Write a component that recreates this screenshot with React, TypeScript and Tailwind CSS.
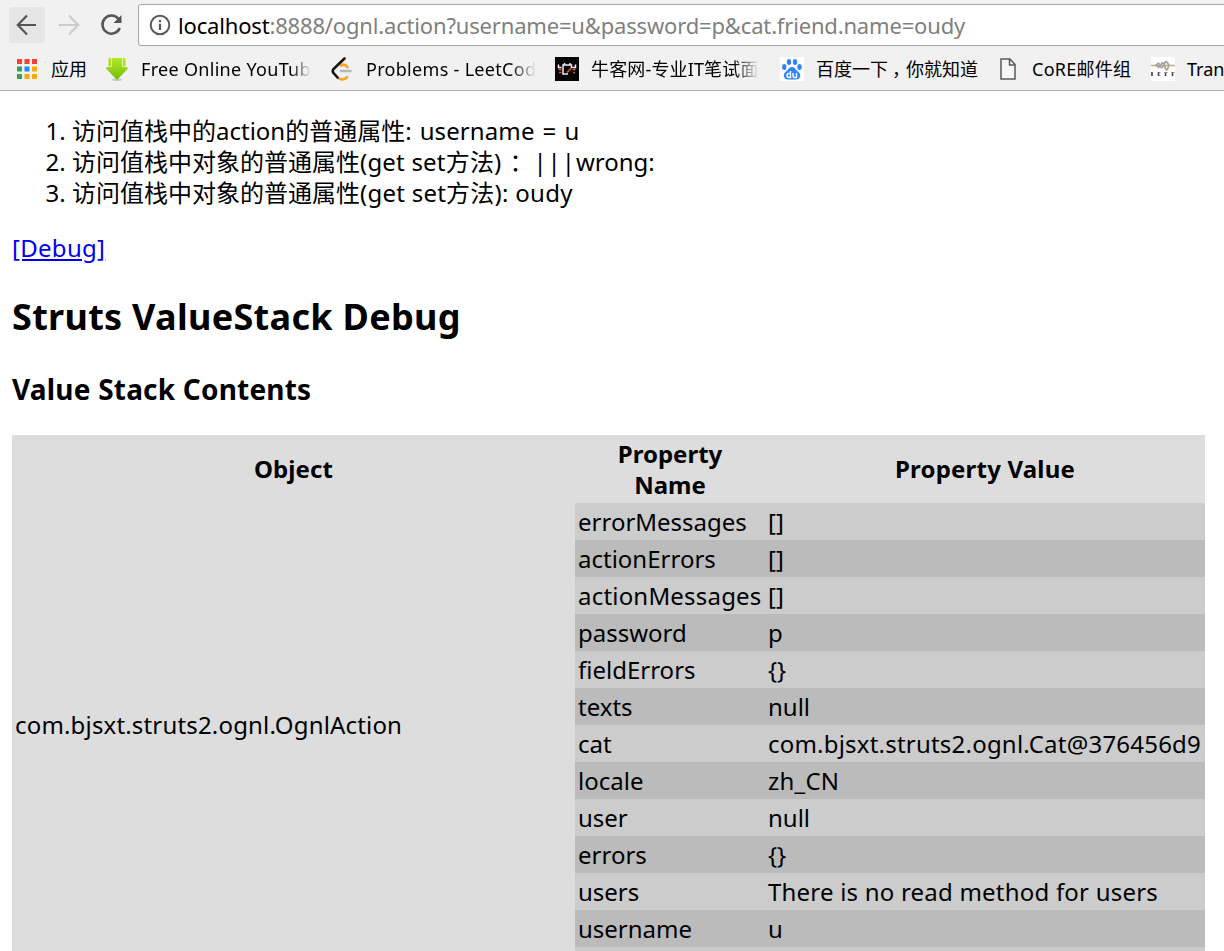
import React from "react";

const rows: [string, string][] = [
  ["errorMessages", "[]"],
  ["actionErrors", "[]"],
  ["actionMessages", "[]"],
  ["password", "p"],
  ["fieldErrors", "{}"],
  ["texts", "null"],
  ["cat", "com.bjsxt.struts2.ognl.Cat@376456d9"],
  ["locale", "zh_CN"],
  ["user", "null"],
  ["errors", "{}"],
  ["users", "There is no read method for users"],
  ["username", "u"],
  ["", ""],
];

const appColors = ["#f44336", "#f44336", "#f44336", "#34a35a", "#1a8cff", "#fbaa05", "#34a35a", "#fbaa05", "#fbaa05"];

function AppsIcon() {
  return (
    <svg className="shrink-0" width="20" height="20" viewBox="0 0 20 20">
      {appColors.map((c, i) => (
        <rect key={i} x={(i % 3) * 7.5} y={Math.floor(i / 3) * 7.5} width="5" height="5" fill={c} />
      ))}
    </svg>
  );
}

function DownloadIcon() {
  return (
    <svg className="shrink-0" width="24" height="24" viewBox="0 0 24 24">
      <defs>
        <linearGradient id="arrow" x1="0" y1="0" x2="0" y2="1">
          <stop offset="0" stopColor="#b4e82c" />
          <stop offset="1" stopColor="#74bd00" />
        </linearGradient>
      </defs>
      <ellipse cx="12" cy="22.8" rx="5" ry="1.2" fill="#c9c9c9" />
      <path d="M3.500 1H20.500V10L23.500 11 12 23 .5 11 3.500 10Z" fill="url(#arrow)" />
      <path d="M6.500 0V9.500H2M17.500 0V9.500H22" stroke="#e2f5b4" strokeWidth="1" fill="none" />
    </svg>
  );
}

function LeetIcon() {
  return (
    <svg width="24" height="24" viewBox="0 0 24 24" fill="none" strokeLinecap="round" strokeWidth="2.600">
      <path d="M7.800 21.200q4.200 3 8.200-1M10 8.500q3-2.500 6.500 1.500" stroke="#ffa116" />
      <path d="M10 14H19.500" stroke="#b8b8b8" />
      <path d="M13.500 1.500 2.500 12q-1.500 2 0 4l4 4.500" stroke="#111" />
    </svg>
  );
}

function NowcoderIcon() {
  return (
    <svg width="24" height="24" viewBox="0 0 24 24" fill="none">
      <rect width="24" height="24" fill="#050505" />
      <path d="M13 17H8V8H16.500V11M9.500 8V6M15 8V6M3.500 7.500v3h3M20.500 7.500v3h-3" stroke="#eee" strokeWidth="1.500" />
      <path d="M3.500 12.500h3M4 15.500h2.500M17.500 12.500h3M18 15.500h2M12 15.500l4.500-4.500" stroke="#e0593c" strokeWidth="1.500" />
    </svg>
  );
}

function BaiduIcon() {
  return (
    <svg width="24" height="24" viewBox="0 0 24 24">
      <rect width="24" height="24" fill="#fff" />
      <g fill="#2d85f8">
        <ellipse cx="4.300" cy="10" rx="2.200" ry="2.900" />
        <ellipse cx="9" cy="5" rx="2.200" ry="3" />
        <ellipse cx="15" cy="5" rx="2.200" ry="3" />
        <ellipse cx="19.500" cy="10" rx="2.200" ry="2.900" />
        <path d="M12 10c-3 0-4 3-6 4.500-4 3-2 8 2 8h8c4.500 0 6-5 2-8-2-1.500-3-4.500-6-4.500Z" />
      </g>
      <path d="M10.500 14v6.500H9a1.800 1.800 0 0 1 0-4H10.500M13 16v3q0 1.500 1.500 1.500h2V16" fill="none" stroke="#fff" strokeWidth="1.400" />
    </svg>
  );
}

function PageIcon() {
  return (
    <svg className="shrink-0" width="16" height="22" viewBox="0 0 16 22" fill="#f7f7f7" stroke="#5a5a5a" strokeWidth="1.500">
      <path d="M1 1H10L15 6.500V21H1ZM9.500 1V7H15" />
    </svg>
  );
}

function IetfIcon() {
  return (
    <svg width="24" height="24" viewBox="0 0 24 24" fill="none">
      <rect width="24" height="24" fill="#fff" />
      <path d="M0 8.500h24" stroke="#c0b080" strokeWidth="1.500" />
      <path d="M5 9.500q2-6 4-1t4-1 5 1M5 7q3 6 5 1t4 2 4-3" stroke="#a5a5a5" strokeWidth="1.800" />
      <path d="M1 15v4M7.500 15v4M14.500 15v4M21.500 15v4" stroke="#444" strokeWidth="1.600" />
      <path d="M7.500 15.500h2M7.500 18.500h2M13.500 15.500h3M21.500 15.500h2" stroke="#888" strokeWidth="1" />
    </svg>
  );
}

export default function App() {
  return (
    <div className="h-[951px] w-[1224px] overflow-hidden bg-white font-['Noto_Sans','Noto_Sans_CJK_SC',sans-serif] text-black">
      <header className="h-[91px] border-b border-[#b3b3b3] bg-[#f1f1f1]">
        <div className="flex h-[49px] items-start pt-1 pl-[9px]">
          <div className="mt-[3px] flex h-9 w-9 shrink-0 items-center justify-center rounded-[3px] bg-[#e6e6e6]">
            <svg width="22" height="22" viewBox="0 0 22 22" fill="none" stroke="#555" strokeWidth="2.200"><path d="M20 11H2M11 1.500 1.800 11l9.200 9.500" /></svg>
          </div>
          <svg className="mt-[10px] ml-[13px] shrink-0" width="22" height="22" viewBox="0 0 22 22" fill="none" stroke="#ccc" strokeWidth="2.200"><path d="M1 11H20M11 1.500l9.200 9.500L11 20.500" /></svg>
          <svg className="mt-[10px] ml-[20px] shrink-0" width="23" height="22" viewBox="0 0 23 22" fill="none"><path d="M18.500 5A9 9 0 1 0 19.800 14" stroke="#555" strokeWidth="2.500" /><path d="M21.500 1V9H13.500Z" fill="#555" /></svg>
          <div className="ml-[15px] flex h-[42px] w-[1100px] shrink-0 items-center rounded-[3px] border border-[#a6a6a6] bg-white pl-[10px]">
            <svg className="shrink-0" width="22" height="22" viewBox="0 0 22 22" fill="none" stroke="#5a5a5a"><circle cx="11" cy="11" r="9.300" strokeWidth="2" /><path d="M11 9.800V16M11 6V8.300" strokeWidth="2.300" /></svg>
            <span className="ml-[7px] text-[22px] tracking-[-0.17px] whitespace-nowrap text-[#808080]"><span className="text-black">localhost</span>:8888/ognl.action?username=u&amp;password=p&amp;cat.friend.name=oudy</span>
          </div>
        </div>
        <nav className="flex h-[40px] items-center pl-[17px] text-[18px] whitespace-nowrap">
          <AppsIcon />
          <span className="ml-[14px] w-[54px] shrink-0">应用</span>
          <DownloadIcon />
          <span className="ml-3 w-[170px] shrink-0 tracking-[0.3px] mask-r-from-88% mask-r-to-100%">Free Online YouTub</span>
          <span className="ml-[20px] flex"><LeetIcon /></span>
          <span className="ml-[11px] w-[170px] shrink-0 tracking-[0.3px] mask-r-from-85% mask-r-to-100%">Problems - LeetCod</span>
          <span className="ml-[19px] flex"><NowcoderIcon /></span>
          <span className="ml-3 w-[168px] shrink-0 overflow-hidden tracking-[0.15px] mask-r-from-85% mask-r-to-100%">牛客网-专业IT笔试面试</span>
          <span className="ml-[21px] flex"><BaiduIcon /></span>
          <span className="ml-3 w-[184px] shrink-0">百度一下<span className="-mr-1 ml-1">，</span>你就知道</span>
          <PageIcon />
          <span className="ml-[16px] w-[119px] shrink-0 tracking-[0.25px]">CoRE邮件组</span>
          <span className="flex shrink-0"><IetfIcon /></span>
          <span className="ml-3">Trans</span>
        </nav>
      </header>
      <main className="px-3 pt-6 text-[24px] leading-[31px]">
        <ol className="list-decimal pl-[60px] whitespace-nowrap">
          <li>访问值栈中的action的普通属性:<span className="tracking-[0.1px] [word-spacing:1.7px]"> username = u</span></li>
          <li>访问值栈中对象的普通属性<span className="tracking-[0.2px]">(get set方法)</span><span className="-mr-2 ml-2">：</span><span className="ml-[7px] [word-spacing:-5.3px]"> | | | wrong:</span></li>
          <li>访问值栈中对象的普通属性<span className="tracking-[0.25px]">(get set方法):</span><span className="tracking-[0.3px]"> oudy</span></li>
        </ol>
        <a className="mt-6 block w-fit tracking-[0.3px] text-[#0000ee] underline">[Debug]</a>
        <h1 className="mt-[30px] text-[36px] leading-[48px] font-bold tracking-[0.3px]">Struts ValueStack Debug</h1>
        <h2 className="mt-[30px] text-[28px] leading-[37px] font-bold tracking-[0.2px]">Value Stack Contents</h2>
        <div className="mt-[27px] flex h-[600px] w-[1193px] bg-[#ddd]">
          <div className="flex w-[563px] flex-col">
            <div className="flex h-[68px] items-center justify-center pb-0.5 font-bold tracking-[0.1px]">Object</div>
            <div className="mt-[206px] pl-[3px] tracking-[0.17px]">com.bjsxt.struts2.ognl.OgnlAction</div>
          </div>
          <div className="w-[630px]">
            <div className="flex h-[68px] items-center text-center font-bold">
              <div className="w-[190px]">Property<br />Name</div>
              <div className="w-[440px] pb-0.5 tracking-[0.2px]">Property Value</div>
            </div>
            {rows.map(([n, v], i) => (
              <div key={i} className={`flex h-[37px] items-center pl-[3px] whitespace-nowrap ${i % 2 ? "bg-[#bbb]" : "bg-[#ccc]"}`}>
                <span className={`w-[190px] ${n === "actionMessages" ? "tracking-[0.2px]" : ""}`}>{n}</span>
                <span className={v.length > 4 ? "tracking-[0.21px]" : ""}>{v}</span>
              </div>
            ))}
          </div>
        </div>
      </main>
    </div>
  );
}
